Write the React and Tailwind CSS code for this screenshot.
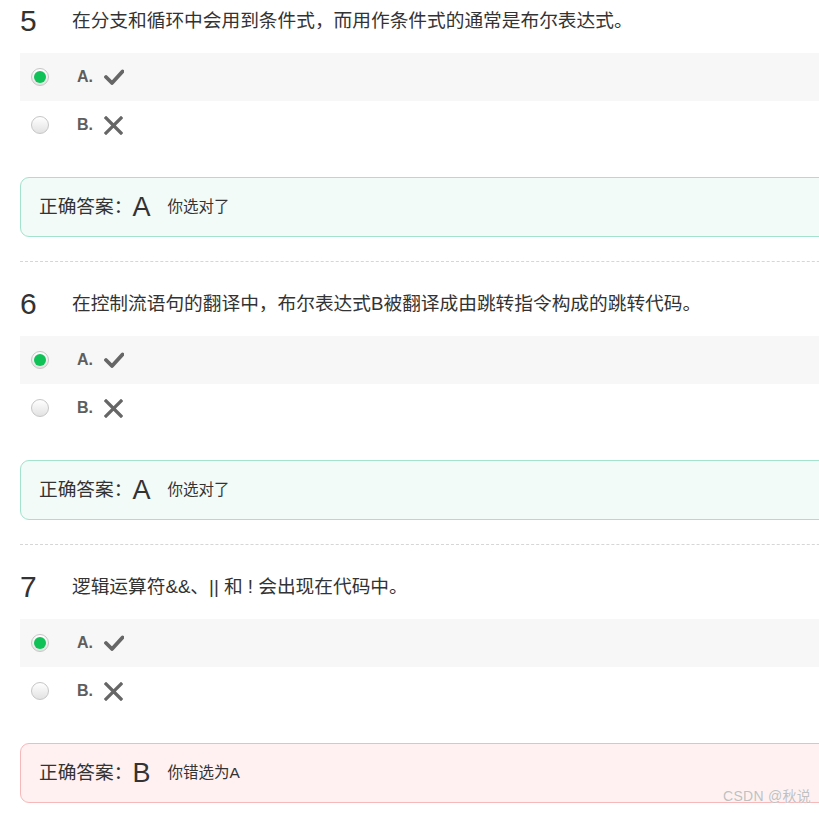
import React from "react";

const FONT = { fontFamily: '"Liberation Sans", "Noto Sans CJK SC", sans-serif' };

function Check() {
  return (
    <svg width="20" height="16" viewBox="0 0 20 16" className="block">
      <path d="M2 8 L8 14 L18.5 2.5" fill="none" stroke="#666" strokeWidth="3.8" strokeLinecap="round" strokeLinejoin="round" />
    </svg>
  );
}

function Cross() {
  return (
    <svg width="19" height="19" viewBox="0 0 19 19" className="block">
      <path d="M2 2 L17 17 M17 2 L2 17" fill="none" stroke="#666" strokeWidth="3.2" strokeLinecap="square" />
    </svg>
  );
}

function Radio({ checked }) {
  return (
    <div className="w-[18px] h-[18px] rounded-full border-[1.5px] border-[#c6c6c6] bg-gradient-to-b from-[#ffffff] to-[#e2e2e2] flex items-center justify-center">
      {checked && <div className="w-[12px] h-[12px] rounded-full bg-[#10c158]" />}
    </div>
  );
}

function Option({ letter, selected, children }) {
  return (
    <div className={`h-[48px] flex items-center pl-[11px] ${selected ? "bg-[#f7f7f7]" : ""}`}>
      <Radio checked={selected} />
      <span className="ml-[28px] text-[16px] font-bold text-[#5e5e5e]">{letter}.</span>
      <span className="ml-[11px]">{children}</span>
    </div>
  );
}

function Question({ num, text, answer, right, note, last }) {
  return (
    <div className={last ? "" : "pb-[21px]"}>
      <div className="h-[42px] flex items-center">
        <span className="w-[52px] text-[30px] text-[#333] leading-none">{num}</span>
        <span className="text-[18.7px] text-[#333]">{text}</span>
      </div>
      <div className="mt-[11px]">
        <Option letter="A" selected>
          <Check />
        </Option>
        <Option letter="B">
          <Cross />
        </Option>
      </div>
      <div
        className={`mt-[28px] h-[60px] rounded-[9px] border flex items-center pl-[18px] w-[820px] ${
          right ? "border-[#a3e2cc] bg-[#f2fbf8]" : "border-[#f6b8b8] bg-[#fff1f1]"
        }`}
      >
        <span className="text-[18.7px] text-[#333]">正确答案：</span>
        <span className="text-[27px] text-[#333] leading-none">{answer}</span>
        <span className="ml-[17px] text-[15.5px] text-[#333]">{note}</span>
      </div>
      {!last && <div className="mt-[24px] border-t border-dashed border-[#d6d6d6]" />}
    </div>
  );
}

export default function App() {
  return (
    <div className="relative w-[819px] h-[813px] overflow-hidden bg-white" style={FONT}>
      <div className="pl-[20px] w-[900px]">
        <Question
          num="5"
          text="在分支和循环中会用到条件式，而用作条件式的通常是布尔表达式。"
          answer="A"
          right
          note="你选对了"
        />
        <Question
          num="6"
          text="在控制流语句的翻译中，布尔表达式B被翻译成由跳转指令构成的跳转代码。"
          answer="A"
          right
          note="你选对了"
        />
        <Question
          num="7"
          text="逻辑运算符&&、|| 和 ! 会出现在代码中。"
          answer="B"
          note="你错选为A"
          last
        />
      </div>
      <div
        className="absolute left-[723px] top-[786px] text-[14px] text-[#c0c0c0] tracking-[0.3px]"
        style={{ textShadow: "0 0 1px #fff" }}
      >
        CSDN @秋说
      </div>
    </div>
  );
}
